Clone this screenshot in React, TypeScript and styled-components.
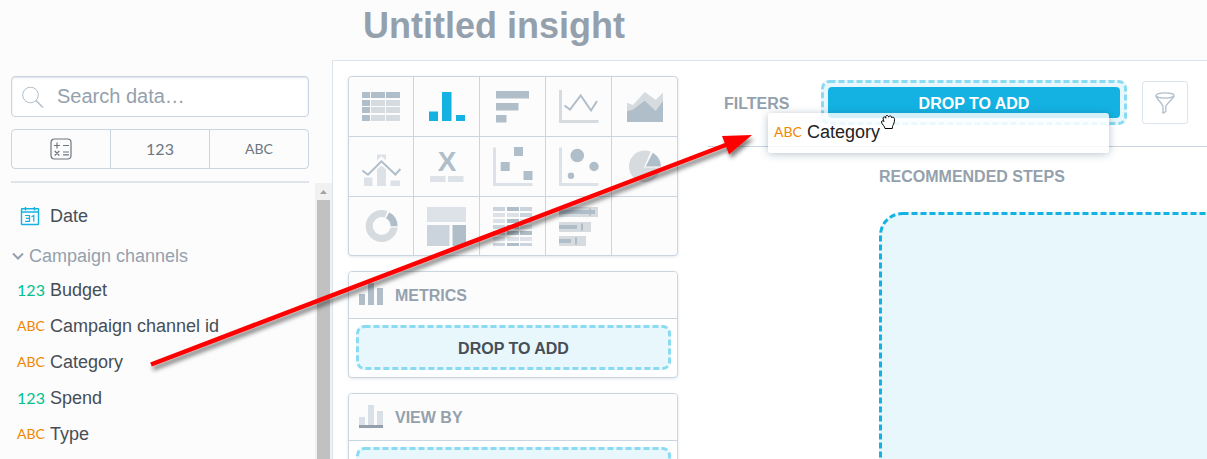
import React from "react";
import styled, { createGlobalStyle, css } from "styled-components";

const c = {
  line: "#c9d5e0",
  lineSoft: "#dde4eb",
  muted: "#94a1ad",
  text: "#464e56",
  panel: "#fcfcfd",
  blue: "#14b2e2",
  sky: "#8adbf1",
  wash: "#e8f7fc",
  green: "#00c18d",
  orange: "#f18600",
  dark: "#b0beca",
  mid: "#cbd4dd",
  light: "#dde2e9",
  gray: "#d6dbdf",
};

const Global = createGlobalStyle`
  *, *::before, *::after { box-sizing: border-box; }
  body { margin: 0; background: #fff; }
  body, button, input { font-family: "Liberation Sans", Arial, sans-serif; }
  ul, h1, h2, h3 { margin: 0; padding: 0; list-style: none; }
  button { padding: 0; border: 0; background: none; cursor: pointer; }
  svg { display: block; flex: none; }
`;

const Shell = styled.div`
  position: relative;
  display: flex;
  flex-direction: column;
  height: 100vh;
  overflow: hidden;
  background: ${c.panel};
`;

const Header = styled.header`
  flex: none;
  height: 60px;
  padding: 5px 16px 0 363px;
`;

const Title = styled.h1`
  font-size: 36px;
  line-height: 42px;
  color: ${c.muted};
`;

const Body = styled.div`
  flex: 1;
  min-height: 0;
  display: flex;
`;

const Sidebar = styled.aside`
  flex: none;
  width: 332px;
  display: flex;
  flex-direction: column;
`;

const SidebarTools = styled.div`
  padding: 16px 23px 0 11px;
`;

const SearchBox = styled.label`
  display: flex;
  align-items: center;
  gap: 13px;
  height: 41px;
  padding: 0 10px;
  border: 1px solid ${c.line};
  border-radius: 4px;
  background: #fff;
  box-shadow: inset 0 1px 2px rgba(20, 56, 93, 0.15);
`;

const SearchInput = styled.input`
  flex: 1;
  min-width: 0;
  padding: 0 0 2px;
  border: 0;
  outline: 0;
  background: transparent;
  font-size: 20px;
  line-height: 24px;
  color: ${c.text};
  &::placeholder {
    color: ${c.muted};
    opacity: 1;
  }
`;

const TypeTabs = styled.div`
  display: grid;
  grid-template-columns: 98px 1fr 1fr;
  height: 40px;
  margin: 12px 0;
  border: 1px solid ${c.line};
  border-radius: 4px;
`;

const TypeTab = styled.button`
  display: flex;
  align-items: center;
  justify-content: center;
  color: #6d7680;
  & + & {
    border-left: 1px solid ${c.line};
  }
`;

const Divider = styled.hr`
  height: 2px;
  margin: 0;
  border: 0;
  background: ${c.lineSoft};
`;

const Scroller = styled.div`
  flex: 1;
  min-height: 0;
  display: flex;
  justify-content: space-between;
`;

const Catalogue = styled.div`
  padding: 15px 0 0 11px;
`;

const Item = styled.li<{ $icon?: boolean }>`
  display: flex;
  align-items: center;
  gap: ${(p) => (p.$icon ? 10 : 5)}px;
  height: 36px;
  padding-left: ${(p) => (p.$icon ? 9 : 6)}px;
  font-size: 18px;
  line-height: 22px;
  color: ${c.text};
`;

const GroupToggle = styled.button`
  display: flex;
  align-items: center;
  gap: 4px;
  height: 38px;
  padding-top: 6px;
  font-size: 18px;
  line-height: 22px;
  color: ${c.muted};
`;

const TagText = styled.span<{ $tone?: string; $numeric: boolean }>`
  width: 28px;
  font-family: Lato, "Liberation Sans", sans-serif;
  font-size: ${(p) => (p.$numeric ? 16 : 14)}px;
  line-height: 20px;
  text-align: center;
  color: ${(p) => p.$tone || "inherit"};
`;

const Track = styled.div`
  flex: none;
  width: 17px;
  display: flex;
  flex-direction: column;
  align-items: center;
  background: #f1f1f1;
`;

const TrackCap = styled.div`
  display: grid;
  place-items: center;
  height: 17px;
`;

const Thumb = styled.div`
  flex: 1;
  width: 13px;
  background: #c1c1c1;
`;

const Main = styled.main`
  flex: 1;
  min-width: 0;
  display: flex;
  gap: 30px;
  padding-left: 15px;
  border-top: 1px solid ${c.lineSoft};
  border-left: 1px solid ${c.lineSoft};
  background: #fff;
`;

const Config = styled.div`
  flex: none;
  width: 330px;
  display: flex;
  flex-direction: column;
  gap: 15px;
  padding-top: 15px;
`;

const frame = css`
  border: 1px solid ${c.line};
  border-radius: 4px;
  box-shadow: 0 1px 3px rgba(20, 56, 93, 0.12);
  overflow: hidden;
`;

const Picker = styled.div`
  ${frame}
  flex: none;
  display: grid;
  grid-template-columns: 64px repeat(4, 1fr);
  grid-template-rows: 59px 59px 58px;
  gap: 1px;
  background: ${c.line};
`;

const Choice = styled.button`
  display: flex;
  align-items: flex-start;
  justify-content: flex-start;
  padding: 8px 10px;
  background: ${c.panel};
`;

const EmptyChoice = styled.div`
  background: ${c.panel};
`;

const Bucket = styled.section`
  ${frame}
  flex: none;
  background: #fff;
`;

const BucketHead = styled.div`
  display: flex;
  align-items: center;
  gap: 12px;
  height: 47px;
  padding-left: 10px;
  border-bottom: 1px solid ${c.line};
  background: ${c.panel};
`;

const Caption = styled.h2`
  && {
    padding-top: 2px;
  }
  font-size: 16px;
  line-height: 20px;
  font-weight: bold;
  color: ${c.muted};
`;

const BucketBody = styled.div`
  padding: 6px 6px 7px 7px;
`;

const DropZone = styled.div`
  position: relative;
  display: flex;
  align-items: center;
  justify-content: center;
  height: 45px;
  padding-top: 2px;
  border-radius: 8px;
  background: ${c.wash};
  font-size: 16px;
  line-height: 20px;
  font-weight: bold;
  color: ${c.text};
`;

const FilterZone = styled(DropZone)`
  width: 306px;
  padding: 7px;
`;

const DropTarget = styled.div`
  flex: 1;
  height: 31px;
  border-radius: 4px;
  background: ${c.blue};
  line-height: 34px;
  text-align: center;
  color: #fff;
`;

const Outline = styled.svg`
  position: absolute;
  inset: 0;
  width: 100%;
  height: 100%;
  overflow: visible;
`;

const OutlineRect = styled.rect`
  width: calc(100% - 3px);
  height: calc(100% - 3px);
`;

const Workspace = styled.div`
  flex: 1;
  min-width: 0;
  display: flex;
  flex-direction: column;
`;

const FilterBar = styled.div`
  flex: none;
  display: flex;
  align-items: center;
  height: 86px;
  padding: 0 16px 2px;
  border-bottom: 1px solid ${c.line};
`;

const FilterLabel = styled(Caption)`
  width: 97px;
`;

const FilterButton = styled.button`
  display: grid;
  place-items: center;
  width: 46px;
  height: 43px;
  margin-left: 15px;
  border: 1px solid ${c.lineSoft};
  border-radius: 3px;
`;

const Steps = styled.section`
  flex: 1;
  min-height: 0;
  display: flex;
  flex-direction: column;
  gap: 25px;
  padding: 18px 0 0 171px;
`;

const Canvas = styled.div`
  position: relative;
  flex: 1;
  margin-right: -30px;
  margin-bottom: -30px;
  border-radius: 24px;
  background: ${c.wash};
`;

const Ghost = styled.div`
  position: absolute;
  top: 113px;
  left: 768px;
  display: flex;
  align-items: center;
  gap: 5px;
  width: 341px;
  height: 40px;
  padding: 0 6px 2px;
  border-radius: 3px;
  background: rgba(255, 255, 255, 0.82);
  box-shadow: 0 1px 8px rgba(20, 56, 93, 0.3);
  font-size: 18px;
  line-height: 22px;
  color: #222;
`;

const Overlay = styled.svg`
  position: absolute;
  top: 0;
  left: 0;
  pointer-events: none;
`;

function Dashes({ tone, radius }: { tone: string; radius: number }) {
  return (
    <Outline aria-hidden="true">
      <OutlineRect
        x="1.5"
        y="1.5"
        rx={radius}
        fill="none"
        stroke={tone}
        strokeWidth="3"
        strokeDasharray="6 3"
      />
    </Outline>
  );
}

function Tag({ kind, tone }: { kind: string; tone?: string }) {
  return <TagText $numeric={kind === "123"} $tone={tone}>{kind}</TagText>;
}

const R = ({ x, y, w, h, f = c.dark }: { x: number; y: number; w: number; h: number; f?: string }) => (
  <rect x={x} y={y} width={w} height={h} fill={f} />
);

const Axis = ({ top, bottom, f = c.light }: { top: number; bottom: number; f?: string }) => (
  <path d={`M3 ${top}h3v${bottom - top - 3}h36.5v3H3z`} fill={f} />
);

const heat = ["mdm", "llm", "ldl", "mdl", "mdd", "lll", "mdm"];
const heatTone: Record<string, string> = { m: c.mid, d: c.dark, l: c.light };

const charts: [string, React.ReactNode][] = [
  ["Table", [7, 15, 22, 30].map((y, i) => (
    <g key={y}>
      <R x={3} y={y} w={8} h={6} />
      <R x={12} y={y} w={14} h={6} f={i ? c.gray : c.dark} />
      <R x={27} y={y} w={14} h={6} f={i ? c.gray : c.dark} />
    </g>
  ))],
  ["Column chart", (
    <g key="g">
      <R x={5} y={26.5} w={9} h={9.5} f={c.blue} />
      <R x={18} y={7} w={9.5} h={29} f={c.blue} />
      <R x={32} y={30} w={9} h={6} f={c.blue} />
    </g>
  )],
  ["Bar chart", (
    <g key="g">
      <R x={6} y={6} w={33} h={7.5} />
      <R x={6} y={18} w={22.5} h={7.5} />
      <R x={6} y={30} w={10.5} h={7.5} />
    </g>
  )],
  ["Line chart", (
    <g key="g">
      <Axis top={5} bottom={38} f={c.gray} />
      <path d="M8.5 20.5l5.5 4 10.7-14L35 25.5l6-9.5" fill="none" stroke={c.dark} strokeWidth="2" />
    </g>
  )],
  ["Area chart", (
    <g key="g">
      <path d="M5 17.7l6 2.3L22.7 7l11 7.7 7.3-7V37H5z" fill={c.gray} />
      <path d="M5 26.3l5.7-1.6 12-9L33.7 26 41 16v21H5z" fill={c.dark} />
    </g>
  )],
  ["Combo chart", (
    <g key="g">
      <R x={5} y={32.5} w={8.5} h={8.5} f={c.light} />
      <path d="M18 9.5h9v6l-4.500-4.300-4.500 4.300zM18 24.500l4.500-4 4.500 4V41h-9z" fill={c.light} />
      <R x={31.5} y={35.5} w={9.5} h={5.5} f={c.light} />
      <path d="M3.3 25.5L9 29.7l13.4-13.4 14 13.2 5-5.5" fill="none" stroke={c.dark} strokeWidth="2" />
    </g>
  )],
  ["Headline", (
    <g key="g">
      <text x="23" y="26" textAnchor="middle" fontSize="28" fontWeight="bold" fontFamily="Liberation Sans, Arial, sans-serif" fill={c.dark}>X</text>
      <R x={6} y={31} w={15.5} h={6} f={c.light} />
      <R x={24} y={31} w={15.5} h={6} f={c.light} />
    </g>
  )],
  ["Scatter plot", (
    <g key="g">
      <Axis top={2.5} bottom={41} />
      <R x={10.7} y={17} w={9} h={9} />
      <R x={24} y={2} w={9} h={9} />
      <R x={33.5} y={26} w={9} h={9} />
    </g>
  )],
  ["Bubble chart", (
    <g key="g">
      <Axis top={2.5} bottom={41} />
      <circle cx="21.3" cy="10.5" r="6.8" fill={c.dark} />
      <circle cx="38" cy="21.5" r="4.7" fill={c.dark} />
      <circle cx="15" cy="30.7" r="3.2" fill={c.dark} />
    </g>
  )],
  ["Pie chart", (
    <g key="g">
      <path d="M22 22.5h16.500A15.8 15.8 0 1 1 28.700 6.700z" fill={c.gray} />
      <path d="M23.700 21.500L30.700 7.700A16 16 0 0 1 39 21.500z" fill={c.dark} />
    </g>
  )],
  ["Donut chart", (
    <g key="g">
      <circle cx="22.7" cy="21" r="12.5" fill="none" stroke={c.gray} strokeWidth="7" />
      <path d="M22.7 21L29.500 3l14 6v13.500h-14z" fill={c.panel} />
      <path d="M30.2 7.3A15.9 15.900 0 0 1 38.600 21.300h-7a9 9 0 0 0-4.600-8z" fill={c.dark} />
    </g>
  )],
  ["Treemap", (
    <g key="g">
      <R x={3} y={2} w={39} h={15} f={c.light} />
      <R x={3} y={20} w={22.5} h={21} f={c.mid} />
      <R x={28.5} y={20} w={13.5} h={21} />
    </g>
  )],
  ["Heatmap", heat.map((row, r) => row.split("").map((t, i) => (
    <R key={`${r}${i}`} x={[3, 17, 30][i]} y={2 + r * 6} w={12} h={r === 6 ? 3 : 4} f={heatTone[t]} />
  )))],
  ["Bullet chart", [[39, 36, 30], [32, 18, 22], [27, 12, 16]].map(([w, v, t], i) => {
    const y = [2, 17, 31][i];
    return (
      <g key={y}>
        <R x={3} y={y} w={w} h={10} f={c.gray} />
        <R x={3} y={y + 3} w={v} h={4} />
        <R x={t + 3} y={y + 1.5} w={2} h={7} />
      </g>
    );
  })],
];

const items = [
  ["123", "Budget"],
  ["ABC", "Campaign channel id"],
  ["ABC", "Category"],
  ["123", "Spend"],
  ["ABC", "Type"],
];

export default function App() {
  return (
    <Shell>
      <Global />
      <Header>
        <Title>Untitled insight</Title>
      </Header>
      <Body>
        <Sidebar>
          <SidebarTools>
            <SearchBox>
              <svg width="22" height="22" viewBox="0 0 22 22" fill="none" stroke={c.dark} aria-hidden="true">
                <circle cx="8.5" cy="9" r="7.8" />
                <path d="M14 14.5l7 7" strokeWidth="1.5" />
              </svg>
              <SearchInput aria-label="Search data" placeholder="Search data…" />
            </SearchBox>
            <TypeTabs>
              <TypeTab aria-label="Calculated">
                <svg width="22" height="22" viewBox="0 0 22 22" fill="none" stroke="currentColor" strokeWidth="1.2" aria-hidden="true">
                  <rect x="1" y="1" width="20" height="20" rx="3.5" />
                  <path d="M4 7.5h6M7 4.5v6M13 7.5h6M4.700 13l4.600 4.500M9.300 13l-4.600 4.500M13 14h6M13 16.800h6" />
                </svg>
              </TypeTab>
              <TypeTab><Tag kind="123" /></TypeTab>
              <TypeTab><Tag kind="ABC" /></TypeTab>
            </TypeTabs>
            <Divider />
          </SidebarTools>
          <Scroller>
            <Catalogue>
              <ul>
                <Item $icon>
                  <svg width="20" height="20" viewBox="0 0 20 20" fill="none" stroke={c.blue} aria-hidden="true">
                    <rect x="1.5" y="2.7" width="17" height="15.8" rx="0.5" strokeWidth="1.4" />
                    <path d="M1 6h18M5.5 1v3.500M14.500 1v3.500" strokeWidth="1.4" />
                    <path d="M5 9.500h4.500v5.800H5M6 12.300h3.500M11.500 10.700l2.300-1.200v6.300" strokeWidth="1.2" />
                  </svg>
                  Date
                </Item>
              </ul>
              <GroupToggle aria-expanded="true">
                <svg width="14" height="14" viewBox="0 0 14 14" fill="none" stroke={c.muted} strokeWidth="2" aria-hidden="true">
                  <path d="M2 4.500l5 5 5-5" />
                </svg>
                Campaign channels
              </GroupToggle>
              <ul>
                {items.map(([kind, name]) => (
                  <Item key={name}>
                    <Tag kind={kind} tone={kind === "123" ? c.green : c.orange} />
                    {name}
                  </Item>
                ))}
              </ul>
            </Catalogue>
            <Track aria-hidden="true">
              <TrackCap>
                <svg width="7" height="4" viewBox="0 0 7 4"><path d="M3.5 0L7 4H0z" fill="#a3a3a3" /></svg>
              </TrackCap>
              <Thumb />
            </Track>
          </Scroller>
        </Sidebar>
        <Main>
          <Config>
            <Picker>
              {charts.map(([name, art]) => (
                <Choice key={name} aria-label={name}>
                  <svg width="44" height="44" viewBox="0 0 44 44" aria-hidden="true">{art}</svg>
                </Choice>
              ))}
              <EmptyChoice />
            </Picker>
            <Bucket>
              <BucketHead>
                <svg width="24" height="24" viewBox="0 0 24 24" fill={c.dark} aria-hidden="true">
                  <path d="M0 11h6v11H0zM9 0h6v22H9zM18 5h6v17h-6z" />
                </svg>
                <Caption>METRICS</Caption>
              </BucketHead>
              <BucketBody>
                <DropZone><Dashes tone={c.sky} radius={7} />DROP TO ADD</DropZone>
              </BucketBody>
            </Bucket>
            <Bucket>
              <BucketHead>
                <svg width="24" height="24" viewBox="0 0 24 24" aria-hidden="true">
                  <path d="M0 12h6v8H0zM9 0h6v20H9zM18 6h6v14h-6z" fill="#d9e0e7" />
                  <path d="M0 20h24v3H0z" fill={c.muted} />
                </svg>
                <Caption>VIEW BY</Caption>
              </BucketHead>
              <BucketBody>
                <DropZone><Dashes tone={c.sky} radius={7} /></DropZone>
              </BucketBody>
            </Bucket>
          </Config>
          <Workspace>
            <FilterBar>
              <FilterLabel>FILTERS</FilterLabel>
              <FilterZone>
                <Dashes tone={c.sky} radius={7} />
                <DropTarget>DROP TO ADD</DropTarget>
              </FilterZone>
              <FilterButton aria-label="Filter">
                <svg width="20" height="22" viewBox="0 0 20 22" fill="none" stroke={c.dark} strokeWidth="1.3" aria-hidden="true">
                  <ellipse cx="10" cy="3.5" rx="9" ry="2.6" />
                  <path d="M1 4c0 2 7 8.500 7 10.500v6.500l2.800-1.500v-5c0-2 8.200-8.500 8.200-10.500" />
                </svg>
              </FilterButton>
            </FilterBar>
            <Steps>
              <Caption>RECOMMENDED STEPS</Caption>
              <Canvas><Dashes tone={c.blue} radius={22} /></Canvas>
            </Steps>
          </Workspace>
        </Main>
      </Body>
      <Ghost>
        <Tag kind="ABC" tone={c.orange} />
        Category
      </Ghost>
      <Overlay width="910" height="400" viewBox="0 0 910 400" aria-hidden="true">
        <defs>
          <filter id="arrowShade" x="-10%" y="-10%" width="120%" height="130%">
            <feDropShadow dx="2" dy="4" stdDeviation="2" floodColor="#000" floodOpacity="0.5" />
          </filter>
        </defs>
        <g filter="url(#arrowShade)">
          <path d="M151 364.5L727 144.5" stroke="#f00" strokeWidth="4.5" />
          <path d="M752 135l-30 1 3.5 9 3.5 9.5z" fill="#f00" />
        </g>
        <path
          d="M885 128.500c0-2-3.500-4.500-3.500-6.500 0-1.500 1.500-1.500 2.500-.5-.5-1.500-1.500-3.500-.5-4.300 1-.7 2 .3 2.300 1-.3-1.700 0-2.700 1.200-2.700 1 0 1.500.7 1.700 1.700.2-1 1-1.400 1.900-1.200.9.200 1.200 1 1.100 2 .5-.8 1.300-1 2-.6 1.300.8.800 3.600.3 5.600-.5 1.800-1.700 2.500-1.700 5.500z"
          fill="#fff"
          stroke="#000"
          strokeLinejoin="round"
        />
      </Overlay>
    </Shell>
  );
}
